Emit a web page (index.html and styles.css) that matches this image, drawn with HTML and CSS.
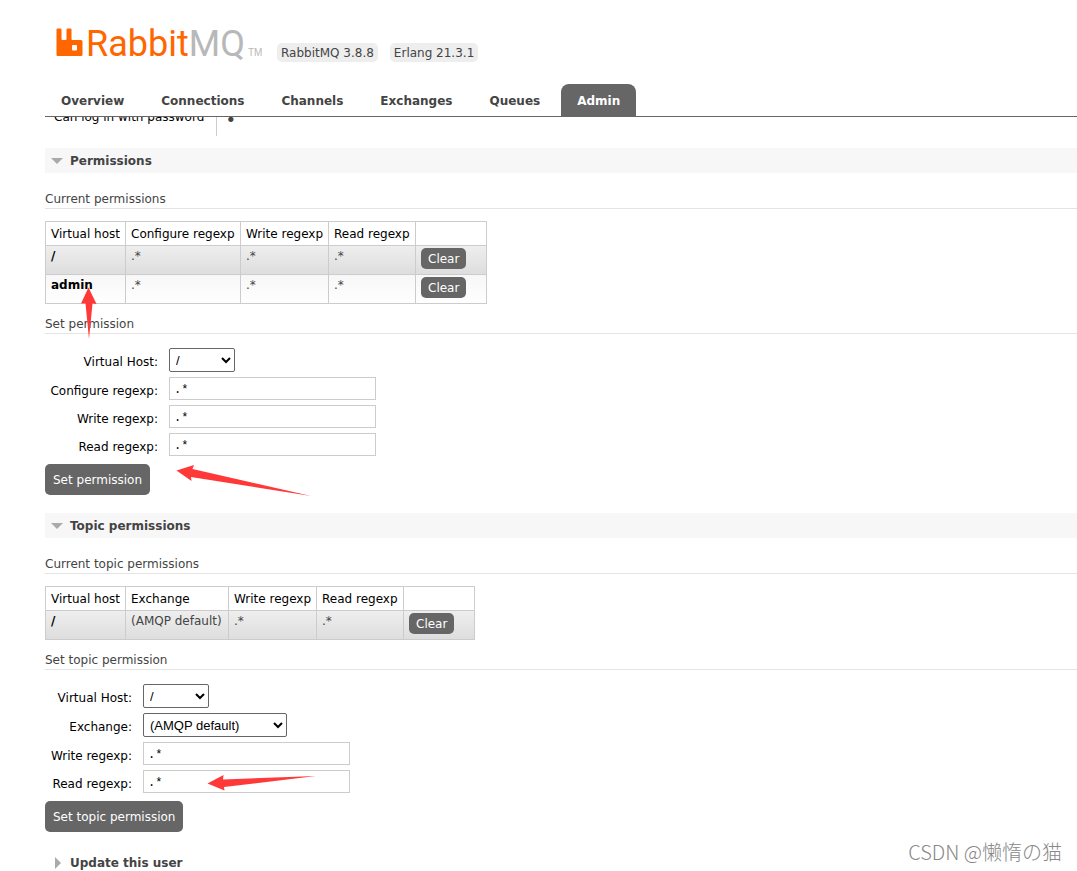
FILE: index.html
```html
<!DOCTYPE html>
<html lang="en">
<head>
<meta charset="UTF-8">
<meta name="viewport" content="width=device-width, initial-scale=1">
<title>RabbitMQ Management</title>
<link rel="stylesheet" href="styles.css">
</head>
<body>

<header>
  <div class="brand">
    <a href="#" class="logo">
      <svg width="27" height="29" viewBox="0 0 27 29" aria-hidden="true">
        <path fill="#f60" fill-rule="evenodd" d="M1.5 0.5H4.500Q5.500 0.500 5.500 1.500V11Q5.500 12 6.500 12H9.500Q10.500 12 10.500 11V1.500Q10.500 0.500 11.500 0.500H14.500Q15.500 0.500 15.500 1.500V11Q15.500 12 16.500 12H25Q26.500 12 26.500 13.500V26.500Q26.500 28 25 28H1.500Q0.500 28 0.500 27V1.500Q0.500 0.500 1.500 0.500ZM17 17Q16 17 16 18V21.500Q16 22.500 17 22.500H20Q21 22.500 21 21.500V18Q21 17 20 17Z"/>
      </svg>
      <span class="logo-name">Rabbit<span class="mq">MQ</span></span>
      <span class="tm">TM</span>
    </a>
    <span class="version">RabbitMQ 3.8.8</span>
    <span class="version">Erlang 21.3.1</span>
  </div>
  <nav class="tabs">
    <a href="#">Overview</a>
    <a href="#">Connections</a>
    <a href="#">Channels</a>
    <a href="#">Exchanges</a>
    <a href="#">Queues</a>
    <a href="#" class="selected">Admin</a>
  </nav>
</header>

<main>
  <table class="facts">
    <tr><th scope="row">Can log in with password</th><td>&bull;</td></tr>
  </table>

  <section>
    <h2 class="open">Permissions</h2>
    <h3>Current permissions</h3>
    <table class="list">
      <colgroup><col class="c-vhost"><col class="c-configure"><col class="c-write"><col class="c-read"><col class="c-action"></colgroup>
      <thead>
        <tr><th>Virtual host</th><th>Configure regexp</th><th>Write regexp</th><th>Read regexp</th><th></th></tr>
      </thead>
      <tbody>
        <tr class="alt1"><td><a href="#">/</a></td><td>.*</td><td>.*</td><td>.*</td><td><button class="small">Clear</button></td></tr>
        <tr class="alt2"><td><a href="#">admin</a></td><td>.*</td><td>.*</td><td>.*</td><td><button class="small">Clear</button></td></tr>
      </tbody>
    </table>

    <h3>Set permission</h3>
    <form>
      <div class="fields">
        <label for="vhost">Virtual Host:</label>
        <select id="vhost"><option>/</option><option>admin</option></select>
        <label for="configure">Configure regexp:</label>
        <input type="text" id="configure" value=".*">
        <label for="write">Write regexp:</label>
        <input type="text" id="write" value=".*">
        <label for="read">Read regexp:</label>
        <input type="text" id="read" value=".*">
      </div>
      <button type="button">Set permission</button>
    </form>
  </section>

  <section>
    <h2 class="open">Topic permissions</h2>
    <h3>Current topic permissions</h3>
    <table class="list">
      <colgroup><col class="c-vhost"><col class="c-exchange"><col class="c-write"><col class="c-read"><col class="c-action"></colgroup>
      <thead>
        <tr><th>Virtual host</th><th>Exchange</th><th>Write regexp</th><th>Read regexp</th><th></th></tr>
      </thead>
      <tbody>
        <tr class="alt1"><td><a href="#">/</a></td><td>(AMQP default)</td><td>.*</td><td>.*</td><td><button class="small">Clear</button></td></tr>
      </tbody>
    </table>

    <h3>Set topic permission</h3>
    <form>
      <div class="fields topic">
        <label for="topic-vhost">Virtual Host:</label>
        <select id="topic-vhost"><option>/</option><option>admin</option></select>
        <label for="exchange">Exchange:</label>
        <select id="exchange" class="wide"><option>(AMQP default)</option></select>
        <label for="topic-write">Write regexp:</label>
        <input type="text" id="topic-write" value=".*">
        <label for="topic-read">Read regexp:</label>
        <input type="text" id="topic-read" value=".*">
      </div>
      <button type="button">Set topic permission</button>
    </form>
  </section>

  <section>
    <h2 class="closed">Update this user</h2>
  </section>
</main>

<!-- red pointer arrows -->
<svg class="arrow arrow-user" width="18" height="54" viewBox="0 0 18 54" aria-hidden="true"><path d="M8.500 0.500L16.500 17L12.500 16.500L9 52L5.500 16.500L1 16.500Z"/></svg>
<svg class="arrow arrow-set" width="136" height="34" viewBox="0 0 136 34" aria-hidden="true"><path d="M0.500 6.500L18 1L16.500 5L135 32L15 13L15.500 17Z"/></svg>
<svg class="arrow arrow-read" width="110" height="18" viewBox="0 0 110 18" aria-hidden="true"><path d="M0.500 9.500L16.500 1L16 5.500L109 2L17 13L17.500 16.500Z"/></svg>

<div class="watermark">CSDN @懒惰の猫</div>

</body>
</html>
```

FILE: styles.css
```css
* { box-sizing: border-box; }

body {
  margin: 0;
  height: 100vh;
  overflow: hidden;
  position: relative;
  display: flex;
  flex-direction: column;
  background: #fff;
  color: #444;
  font: 12px/16px Verdana, "DejaVu Sans", sans-serif;
}

a { color: inherit; text-decoration: none; }

/* Header */
header {
  flex: none;
  margin-left: 45px;
  padding-top: 20px;
  border-bottom: 1px solid #666;
}

.brand {
  display: flex;
  align-items: flex-end;
  gap: 12px;
  height: 42px;
  margin-bottom: 22px;
}

.logo {
  display: flex;
  align-items: flex-end;
  width: 220px;
  padding-left: 11px;
  height: 42px;
  color: #f60;
}

.logo svg { flex: none; margin: 0 3px 5px 0; }

.logo-name {
  font: 36px/36px Roboto, sans-serif;
}

.mq { color: #b8b8b8; }

.tm {
  margin: 0 0 3px 3px;
  color: #b8b8b8;
  font: 10px/12px "Liberation Sans", sans-serif;
}

.version {
  padding: 2px 4px 1px;
  border-radius: 5px;
  background: #eee;
}

.tabs { display: flex; gap: 5px; }

.tabs a {
  padding: 9px 16px 7px;
  border-radius: 8px 8px 0 0;
  font-weight: bold;
}

.tabs .selected { background: #666; color: #fff; }

/* Content */
main {
  flex: 1;
  min-height: 0;
  overflow: hidden;
  padding-left: 45px;
}

/* scrolled partly under the header */
.facts {
  margin: -10px 0 12px;
  border-collapse: collapse;
  color: #000;
}

.facts th {
  width: 171px;
  height: 29px;
  padding: 2px 9px;
  border-right: 1px solid #ccc;
  font-weight: normal;
  text-align: left;
  vertical-align: top;
  white-space: nowrap;
}

.facts td {
  padding: 5px 9px 0;
  color: #444;
  font-size: 18px;
  vertical-align: top;
}

section { margin-bottom: 18px; }

h2 {
  display: flex;
  align-items: center;
  height: 25px;
  margin: 0 0 18px;
  padding-left: 6px;
  font-size: 12px;
}

h2::before { content: ""; }

.open { background: #f7f7f7; }

.open::before {
  margin-right: 7px;
  border: 6px solid transparent;
  border-top-color: #aaa;
  border-bottom: 0;
}

.closed::before {
  margin: 0 9px 0 4px;
  border: 6px solid transparent;
  border-left-color: #aaa;
  border-right: 0;
}

h3 {
  margin: 0 0 12px;
  padding-bottom: 1px;
  border-bottom: 1px solid #e4e4e4;
  font-size: 12px;
  font-weight: normal;
}

.list {
  margin-bottom: 12px;
  border-collapse: collapse;
  table-layout: fixed;
  width: 1px;
}

.c-vhost { width: 80px; }
.c-configure { width: 115px; }
.c-exchange { width: 103px; }
.c-write { width: 88px; }
.c-read { width: 87px; }
.c-action { width: 71px; }

.list th, .list td {
  padding: 4px 5px 3px;
  border: 1px solid #ccc;
  text-align: left;
  white-space: nowrap;
}

.list th { height: 24px; color: #000; font-weight: normal; }

.list td {
  height: 29px;
  padding: 2px 5px;
  vertical-align: top;
}

.list td a { color: #000; font-weight: bold; }

.alt1 { background: linear-gradient(#eee, #ddd); }
.alt2 { background: linear-gradient(#f7f7f7, #fff); }

/* Forms */
.fields {
  display: grid;
  grid-template-columns: 113px 1fr;
  column-gap: 11px;
  row-gap: 5px;
  justify-items: start;
  margin: 14px 0 8px;
  color: #000;
}

.topic { grid-template-columns: 87px 1fr; }

.fields label { justify-self: end; padding-top: 6px; }

input {
  width: 207px;
  height: 23px;
  padding: 3px 4px 1px;
  border: 1px solid #ccc;
  font: 12px "Liberation Mono", monospace;
}

select {
  width: 66px;
  height: 24px;
  padding: 0 2px;
  border: 1px solid #666;
  border-radius: 2px;
  background: #fff;
  font: 13px "Liberation Sans", sans-serif;
}

.wide { width: 144px; }

button {
  display: block;
  height: 31px;
  padding: 0 8px;
  border: 0;
  border-radius: 5px;
  background: #666;
  color: #fff;
  font: 12px Verdana, "DejaVu Sans", sans-serif;
}

.small { height: 21px; padding: 0 7px; }

/* Overlays */
.arrow { position: absolute; fill: #ff3838; }
.arrow-user { left: 80px; top: 287px; }
.arrow-set { left: 176px; top: 464px; }
.arrow-read { left: 207px; top: 774px; }

.watermark {
  position: absolute;
  right: 15px;
  bottom: 6px;
  color: #888;
  font: 300 20px/26px "Noto Sans CJK SC", sans-serif;
}
```
